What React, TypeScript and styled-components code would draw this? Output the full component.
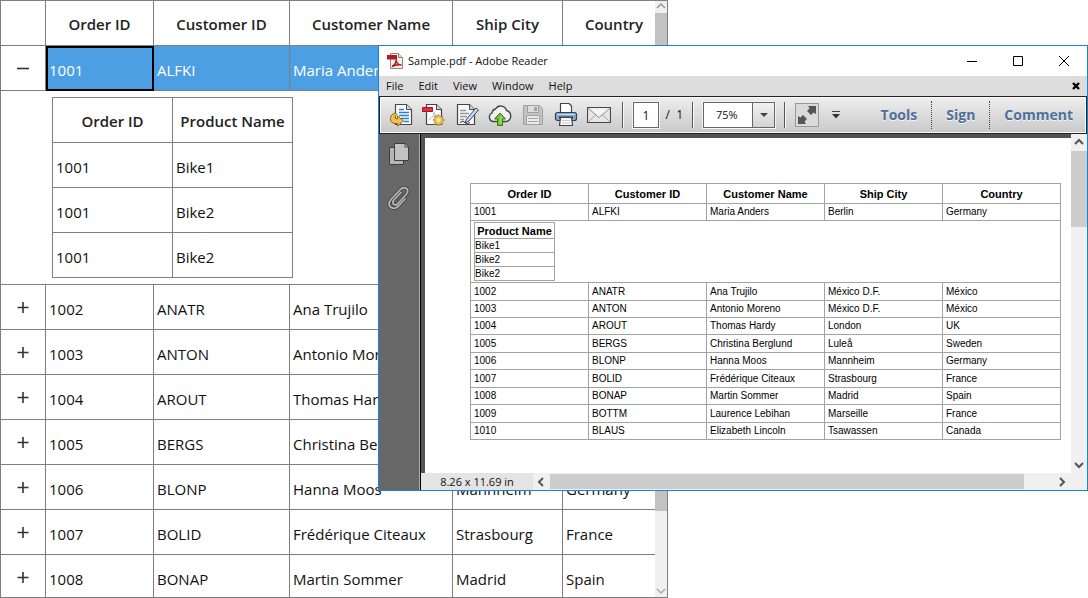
import React from "react";
import styled, { createGlobalStyle, css } from "styled-components";

const GlobalStyle = createGlobalStyle`
  *, *::before, *::after { box-sizing: border-box; }
  body { margin: 0; background: #fff; overflow-x: hidden; }
  button, input, select { font: inherit; color: inherit; margin: 0; }
`;

const uiFont = `"Open Sans", "Noto Sans", sans-serif`;
const line = "#7f7f7f";

/* ---------- page ---------- */

const Desktop = styled.div`
  display: grid;
  grid-template-columns: 378fr 290fr 420fr;
  align-items: start;
  height: 100vh;
  overflow: hidden;
  font-family: ${uiFont};
`;

/* ---------- data grid ---------- */

const GridPane = styled.section`
  grid-area: 1 / 1 / 2 / 3;
  display: flex;
  height: 100vh;
  border: 1px solid ${line};
  overflow: hidden;
`;

const GridView = styled.div`
  flex: 1;
  min-width: 0;
  overflow: hidden;
`;

const GridTable = styled.table`
  width: 100%;
  table-layout: fixed;
  border-collapse: separate;
  border-spacing: 0;
  font-size: 15px;
  line-height: 20px;
  color: #111;
`;

const GridCol = styled.col<{ $width: number }>`
  width: ${(p) => p.$width}px;
`;

const GridRow = styled.tr<{ $selected?: boolean }>`
  height: 45px;
  ${(p) =>
    p.$selected &&
    css`
      color: #fff;
      td + td { background: #4d9fe3; }
    `}
`;

const cell = css<{ $last?: boolean }>`
  padding: 4px 3px 0;
  border-right: ${(p) => (p.$last ? 0 : 1)}px solid ${line};
  border-bottom: 1px solid ${line};
  white-space: nowrap;
  overflow: hidden;
`;

const GridHead = styled.th<{ $last?: boolean }>`
  ${cell}
  padding: 2px 2px 0 ${(p) => (p.$last ? 12 : 2)}px;
  font-weight: 600;
  text-align: center;
  color: #222;
`;

const GridCell = styled.td<{ $current?: boolean; $last?: boolean }>`
  ${cell}
  ${(p) =>
    p.$current &&
    css`
      outline: 2px solid #000;
      outline-offset: -2px;
    `}
`;

const ExpandCell = styled.td`
  ${cell}
  padding: 0;
  text-align: center;
`;

const ExpandButton = styled.button`
  display: block;
  width: 44px;
  height: 44px;
  padding: 0;
  border: 0;
  background: none;
  svg { display: block; margin: 0 auto; }
`;

const DetailCell = styled.td`
  padding: 6px 6px 6px 51px;
  border-bottom: 1px solid ${line};
`;

const DetailTable = styled(GridTable)`
  width: 241px;
  border: 1px solid ${line};
  border-width: 1px 0 0 1px;
`;

/* ---------- scrollbars ---------- */

const VScroll = styled.div<{ $width: number }>`
  display: flex;
  flex-direction: column;
  flex: none;
  width: ${(p) => p.$width}px;
  background: #f0f0f0;
`;

const HScroll = styled.div`
  display: flex;
  flex: 1;
  background: #f0f0f0;
  padding: 1px 0;
`;

const ScrollButton = styled.button<{ $w: number; $h: number }>`
  display: flex;
  align-items: center;
  justify-content: center;
  flex: none;
  width: ${(p) => p.$w}px;
  height: ${(p) => p.$h}px;
  padding: 0;
  border: 0;
  background: none;
`;

const Track = styled.div<{ $vertical?: boolean }>`
  flex: 1;
  display: flex;
  flex-direction: ${(p) => (p.$vertical ? "column" : "row")};
`;

const Thumb = styled.div<{ $size: string; $color: string }>`
  flex: 0 0 ${(p) => p.$size};
  background: ${(p) => p.$color};
`;

/* ---------- reader window ---------- */

const Reader = styled.section`
  grid-area: 1 / 2 / 2 / 4;
  z-index: 1;
  margin-top: 45px;
  border: 1px solid #1883d7;
  background: #fff;
  font-size: 12px;
  line-height: 16px;
  color: #111;
`;

const TitleBar = styled.header`
  display: flex;
  align-items: center;
  height: 30px;
  padding-left: 8px;
`;

const Title = styled.h1`
  flex: 1;
  margin: 0 0 0 5px;
  font: 11px/16px ${uiFont};
`;

const CaptionButton = styled.button`
  display: flex;
  align-items: center;
  justify-content: center;
  width: 46px;
  height: 30px;
  padding: 0;
  border: 0;
  background: none;
`;

const MenuBar = styled.nav`
  display: flex;
  align-items: center;
  gap: 1px;
  height: 20px;
  padding: 0 7px 0 0;
  background: #ddd;
`;

const MenuItem = styled.button`
  padding: 0 7px;
  border: 0;
  background: none;
  font-size: 11px;
`;

const CloseDoc = styled.button`
  display: flex;
  margin-left: auto;
  padding: 0;
  border: 0;
  background: none;
`;

const Toolbar = styled.div`
  display: flex;
  align-items: center;
  height: 38px;
  padding: 0 4px;
  border: 1px solid #222;
  background: linear-gradient(#eee, #c9c9c9);
  box-shadow: inset 0 0 0 1px #fafafa;
`;

const ToolButton = styled.button`
  display: flex;
  align-items: center;
  justify-content: center;
  width: 33px;
  height: 32px;
  padding: 0;
  border: 0;
  background: none;
`;

const Separator = styled.span`
  width: 2px;
  height: 26px;
  border-left: 1px solid #555;
  border-right: 1px solid #f8f8f8;
  margin: 0 9px 0 7px;
`;

const PageInput = styled.input`
  width: 26px;
  height: 26px;
  padding: 0;
  border: 1px solid #666;
  background: #fff;
  box-shadow: 0 0 0 1px #f4f4f4;
  text-align: center;
`;

const PageCount = styled.span`
  width: 26px;
  padding-right: 2px;
  text-align: right;
  white-space: pre;
`;

const ZoomBox = styled.span`
  position: relative;
  display: flex;
  width: 72px;
  height: 26px;
  margin-right: 2px;
  box-shadow: 0 0 0 1px #f4f4f4;
`;

const ZoomSelect = styled.select`
  appearance: none;
  width: 100%;
  padding: 0 0 0 12px;
  border: 1px solid #666;
  border-radius: 0;
  background: #fff;
  font-size: 11px;
`;

const ZoomArrow = styled.span`
  position: absolute;
  inset: 1px 1px 1px auto;
  display: flex;
  align-items: center;
  justify-content: center;
  width: 22px;
  border-left: 1px solid #666;
  background: linear-gradient(#f2f2f2, #d4d4d4);
  pointer-events: none;
`;

const FitButton = styled(ToolButton)`
  width: 24px;
  height: 24px;
  border: 1px solid #999;
  background: #dadada;
`;

const PanelLinks = styled.div`
  display: flex;
  align-items: center;
  margin-left: auto;
`;

const PanelButton = styled.button`
  height: 28px;
  padding: 0 14px;
  border: 0;
  background: none;
  font-size: 14px;
  font-weight: 700;
  color: #4f6f9c;
  text-shadow: 0 1px 0 #f4f4f4;
  & + & { border-left: 1px dotted #444; }
  &:last-child { padding-right: 9px; }
`;

const ReaderBody = styled.div`
  display: flex;
`;

const SideBar = styled.aside`
  display: flex;
  flex-direction: column;
  align-items: center;
  gap: 12px;
  width: 42px;
  padding: 4px 2px 4px 0;
  background: #676767;
  border-right: 1px solid #000;
  box-shadow: inset -1px 0 0 #aaa;
`;

const SideButton = styled(ToolButton)`
  height: 32px;
`;

const Viewer = styled.div`
  flex: 1;
  min-width: 0;
`;

const PageRow = styled.div`
  padding: 4px 0 0 4px;
  background: #535353;
`;

const Paper = styled.div`
  padding: 45px 10px 33px 45px;
  background: #fff;
`;

const StatusRow = styled.div`
  display: flex;
  height: 17px;
`;

const PageSize = styled.div`
  width: 112px;
  background: #e4e4e4;
  font-size: 11px;
  line-height: 17px;
  text-align: center;
`;

/* ---------- exported table ---------- */

const pdfLine = "#a3a3a3";

const PdfTable = styled.table`
  width: 100%;
  table-layout: fixed;
  border-collapse: separate;
  border-spacing: 0;
  border: 1px solid ${pdfLine};
  border-width: 1px 0 0 1px;
  font: 10px/12px "Liberation Sans", Arial, sans-serif;
  color: #000;
`;

const PdfRow = styled.tr<{ $height: number }>`
  height: ${(p) => p.$height}px;
`;

const PdfHead = styled.th`
  padding: 0;
  border-right: 1px solid ${pdfLine};
  border-bottom: 1px solid ${pdfLine};
  font-size: 11px;
  white-space: nowrap;
`;

const PdfCell = styled.td<{ $inset?: number }>`
  padding: 0 0 0 ${(p) => p.$inset ?? 3}px;
  border-right: 1px solid ${pdfLine};
  border-bottom: 1px solid ${pdfLine};
  white-space: nowrap;
`;

const PdfNested = styled(PdfTable)`
  width: 81px;
`;

/* ---------- data ---------- */

const headers = ["Order ID", "Customer ID", "Customer Name", "Ship City", "Country"];
const columnWidths = [45, 108, 136, 163, 110, 92];

const orders = [
  ["1001", "ALFKI", "Maria Anders", "Berlin", "Germany"],
  ["1002", "ANATR", "Ana Trujilo", "México D.F.", "México"],
  ["1003", "ANTON", "Antonio Moreno", "México D.F.", "México"],
  ["1004", "AROUT", "Thomas Hardy", "London", "UK"],
  ["1005", "BERGS", "Christina Berglund", "Luleå", "Sweden"],
  ["1006", "BLONP", "Hanna Moos", "Mannheim", "Germany"],
  ["1007", "BOLID", "Frédérique Citeaux", "Strasbourg", "France"],
  ["1008", "BONAP", "Martin Sommer", "Madrid", "Spain"],
  ["1009", "BOTTM", "Laurence Lebihan", "Marseille", "France"],
  ["1010", "BLAUS", "Elizabeth Lincoln", "Tsawassen", "Canada"],
];

const products = ["Bike1", "Bike2", "Bike2"];
const pdfRowHeights = [18, 17, 17, 18, 17, 18, 17, 18, 17];

/* ---------- icons ---------- */

const arrowPaths = {
  up: "M1 6 L5 2 L9 6",
  down: "M1 3 L5 7 L9 3",
  left: "M6 1 L2 5 L6 9",
  right: "M2 1 L6 5 L2 9",
};

const Arrow = ({ dir, color, weight = 2 }: { dir: keyof typeof arrowPaths; color: string; weight?: number }) => (
  <svg width="10" height="10" viewBox="0 0 10 10" fill="none" stroke={color} strokeWidth={weight}>
    <path d={arrowPaths[dir]} />
  </svg>
);

const Expander = ({ open }: { open: boolean }) => (
  <svg width="12" height="12" viewBox="0 0 12 12" stroke="#333" strokeWidth="1.6">
    <path d={open ? "M0 6.5H12" : "M0.500 6.500H11.500M6 1V12"} />
  </svg>
);

const PdfLogo = () => (
  <svg width="16" height="16" viewBox="0 0 16 16">
    <path d="M3.500 .5H11.500L15.500 4.500V15.500H3.500Z" fill="#f6f1f1" stroke="#8d8484" />
    <path d="M11.500 .5V4.500H15.500" fill="#ddd" stroke="#8d8484" />
    <path d="M0 2H10V6.500H0Z" fill="#b8161c" />
    <path d="M5 13.500C7.500 12 9.500 9.500 9 6.500C9.500 10 12 12 14.500 12C11 11.500 8 12 5 13.500Z" fill="none" stroke="#b8161c" strokeWidth="1.500" />
  </svg>
);

const OpenIcon = () => (
  <svg width="24" height="24" viewBox="0 0 24 24">
    <path d="M6.500 1.500H17.500L22.500 6.500V21.500H6.500Z" fill="#fbfbfb" stroke="#4a4a4a" strokeWidth="1.200" />
    <path d="M17.500 1.500V6.500H22.500" fill="#d5d5d5" stroke="#4a4a4a" />
    <path d="M10 6.500H15M10 9.500H20M10 12.500H20M12 15.500H20M15 18.500H20" stroke="#2d7fd0" strokeWidth="1.500" />
    <path d="M6.500 10C1 11 -.5 18 4 20Q6 21 8.500 20.500V23L14.500 18L8.500 13V16C6 16.500 5 14 8 11.500Z" fill="#f3c24b" stroke="#8a6416" />
  </svg>
);

const CreateIcon = () => (
  <svg width="24" height="24" viewBox="0 0 24 24">
    <path d="M4.500 1.500H14.500L19.500 6.500V21.500H4.500Z" fill="#fbfbfb" stroke="#444" strokeWidth="1.200" />
    <path d="M14.500 1.500V6.500H19.500" fill="#d5d5d5" stroke="#444" />
    <path d="M.5 4.500H10.500V8.500H.5Z" fill="#e0303a" stroke="#a31820" />
    <path d="M7 17C10 15 12 12 12 9.500Q13 13 16 13" fill="none" stroke="#b8b8b8" />
    <path d="M16.500 11.500L18 13.500L20.500 13L20 15.500L22.500 17L20 18.500L20.500 21.500L18 21L16.500 23L15 21L12.500 21.500L13 18.500L11 17L13 15.500L12.500 13L15 13.500Z" fill="#f0c05a" stroke="#a37c28" strokeWidth=".8" />
    <circle cx="16.500" cy="17" r="2" fill="#fbe3a0" />
  </svg>
);

const SignIcon = () => (
  <svg width="24" height="24" viewBox="0 0 24 24">
    <path d="M2.500 1.500H14.500L19.500 6.500V21.500H2.500Z" fill="#f7f7f7" stroke="#444" strokeWidth="1.200" />
    <path d="M14.500 1.500V6.500H19.500" fill="#d5d5d5" stroke="#444" />
    <path d="M5 7.500H11M5 10.500H14M5 13.500H12M5 16.500H9" stroke="#999" strokeWidth="1.300" />
    <path d="M21 5L23.500 7L14 18L10 20L11.500 16Z" fill="#c7d9ec" stroke="#2f4a68" />
    <path d="M5 19.500Q8 17 10 19.500T15 19.500" fill="none" stroke="#333" />
  </svg>
);

const CloudIcon = () => (
  <svg width="26" height="24" viewBox="0 0 26 24">
    <path d="M6 18.500A4.500 4.500 0 0 1 5 10A4.500 4.500 0 0 1 8.500 6A6 6 0 0 1 19.500 7.500A5.800 5.800 0 0 1 20 18.500Z" fill="#eef0f1" stroke="#444" strokeWidth="1.300" />
    <path d="M13 10L18.500 16H15.500V22.500H10.500V16H7.500Z" fill="#6fc02f" stroke="#3a7a17" />
    <path d="M13 12L16 15H14.500V21H12.500Z" fill="#a0dc70" />
  </svg>
);

const SaveIcon = () => (
  <svg width="24" height="24" viewBox="0 0 24 24" stroke="#a0a0a0">
    <path d="M2.500 2.500H18.500L21.500 5.500V21.500H2.500Z" fill="#c4c4c4" />
    <path d="M6.500 2.500H17.500V9.500H6.500Z" fill="#dedede" />
    <path d="M13.500 4.500H15.500V7.500H13.500Z" fill="#a8a8a8" />
    <path d="M5.500 12.500H18.500V21.500H5.500Z" fill="#ececec" />
    <path d="M7 15.500H17M7 18.500H17" />
  </svg>
);

const PrintIcon = () => (
  <svg width="24" height="24" viewBox="0 0 24 24">
    <path d="M6.500 .5H15L17.500 3V11H6.500Z" fill="#fff" stroke="#444" strokeWidth="1.200" />
    <rect x="1.500" y="9.500" width="21" height="8" rx="2" fill="#86a9cb" stroke="#2f4258" strokeWidth="1.200" />
    <path d="M3 11.500H21" stroke="#c9dced" />
    <path d="M5 14.500H19" stroke="#26384b" strokeWidth="2" />
    <path d="M6.500 14.500H17.500L18.500 22.500H5.500Z" fill="#fafafa" stroke="#444" strokeWidth="1.200" />
    <path d="M8 17.500H16M8 20H16" stroke="#c3ccd4" />
  </svg>
);

const MailIcon = () => (
  <svg width="24" height="24" viewBox="0 0 24 24">
    <path d="M.5 4.500H23.500V19.500H.5Z" fill="#e6e6e6" stroke="#484848" strokeWidth="1.200" />
    <path d="M1.500 18.500L9 11.500M22.500 18.500L15 11.500" stroke="#a8a8a8" />
    <path d="M1.500 5.500L12 14.500L22.500 5.500" fill="#f4f4f4" stroke="#8d8d8d" />
  </svg>
);

const FitIcon = () => (
  <svg width="20" height="20" viewBox="0 0 20 20" fill="#555">
    <path d="M11 1H19V9L16.500 7.500L14 10L10 6L12.500 3.500Z" />
    <path d="M9 19H1V11L3.500 12.500L6 10L10 14L7.500 16.500Z" />
  </svg>
);

const MoreIcon = () => (
  <svg width="10" height="10" viewBox="0 0 10 10">
    <path d="M1 1.500H9" stroke="#444" />
    <path d="M1 4H9L5 8.500Z" fill="#333" />
  </svg>
);

const PagesIcon = () => (
  <svg width="22" height="24" viewBox="0 0 22 24" fill="#b5b5b5" stroke="#3f3f3f">
    <path d="M1.500 5.500H15.500V22.500H1.500Z" />
    <path d="M6.500 1.500H17.500L20.500 4.500V18.500H6.500Z" fill="#c2c2c2" />
    <path d="M17 2V5H20" fill="none" />
  </svg>
);

const ClipIcon = () => (
  <svg width="24" height="24" viewBox="0 0 24 24" fill="none" strokeLinecap="round">
    <g stroke="#3f3f3f" strokeWidth="3.400">
      <path d="M14 6.500L6.500 14.500Q5 17 7 18.500Q9 19.500 10.500 18L19.500 8Q22 4.500 19.500 2.500Q17 .8 14 3L4 13.500Q.5 18 3.500 21Q7 24 11 20.500L18 13" />
    </g>
    <g stroke="#b5b5b5" strokeWidth="1.800">
      <path d="M14 6.500L6.500 14.500Q5 17 7 18.500Q9 19.500 10.500 18L19.500 8Q22 4.500 19.500 2.500Q17 .8 14 3L4 13.500Q.5 18 3.500 21Q7 24 11 20.500L18 13" />
    </g>
  </svg>
);

const tools = [
  { label: "Open", icon: <OpenIcon /> },
  { label: "Create PDF", icon: <CreateIcon /> },
  { label: "Sign document", icon: <SignIcon /> },
  { label: "Upload", icon: <CloudIcon /> },
  { label: "Save", icon: <SaveIcon /> },
  { label: "Print", icon: <PrintIcon /> },
  { label: "E-mail", icon: <MailIcon /> },
];

/* ---------- components ---------- */

function OrderRow({ order, open }: { order: string[]; open: boolean }) {
  return (
    <GridRow $selected={open}>
      <ExpandCell>
        <ExpandButton aria-label={open ? "Collapse" : "Expand"} aria-expanded={open}>
          <Expander open={open} />
        </ExpandButton>
      </ExpandCell>
      {order.map((value, i) => (
        <GridCell key={i} $current={open && i === 0} $last={i === order.length - 1}>{value}</GridCell>
      ))}
    </GridRow>
  );
}

function OrdersGrid() {
  return (
    <GridPane aria-label="Orders">
      <GridView>
        <GridTable>
          <colgroup>
            {columnWidths.map((w, i) => <GridCol key={i} $width={w} />)}
          </colgroup>
          <thead>
            <GridRow>
              <GridHead />
              {headers.map((h, i) => <GridHead key={h} $last={i === headers.length - 1}>{h}</GridHead>)}
            </GridRow>
          </thead>
          <tbody>
            <OrderRow order={orders[0]} open />
            <tr>
              <DetailCell colSpan={6}>
                <DetailTable>
                  <thead>
                    <GridRow>
                      <GridHead>Order ID</GridHead>
                      <GridHead>Product Name</GridHead>
                    </GridRow>
                  </thead>
                  <tbody>
                    {products.map((name, i) => (
                      <GridRow key={i}>
                        <GridCell>1001</GridCell>
                        <GridCell>{name}</GridCell>
                      </GridRow>
                    ))}
                  </tbody>
                </DetailTable>
              </DetailCell>
            </tr>
            {orders.slice(1, 8).map((o) => <OrderRow key={o[0]} order={o} open={false} />)}
          </tbody>
        </GridTable>
      </GridView>
      <VScroll $width={12}>
        <ScrollButton $w={12} $h={12} aria-label="Scroll up"><Arrow dir="up" color="#999" weight={1.5} /></ScrollButton>
        <Track $vertical><Thumb $size="87%" $color="#c2c2c2" /></Track>
        <ScrollButton $w={12} $h={12} aria-label="Scroll down"><Arrow dir="down" color="#aaa" weight={1.5} /></ScrollButton>
      </VScroll>
    </GridPane>
  );
}

function ExportedTable() {
  return (
    <PdfTable>
      <thead>
        <PdfRow $height={20}>
          {headers.map((h) => <PdfHead key={h}>{h}</PdfHead>)}
        </PdfRow>
      </thead>
      <tbody>
        <PdfRow $height={17}>
          {orders[0].map((v) => <PdfCell key={v}>{v}</PdfCell>)}
        </PdfRow>
        <PdfRow $height={62}>
          <PdfCell colSpan={5}>
            <PdfNested>
              <thead>
                <PdfRow $height={16}><PdfHead>Product Name</PdfHead></PdfRow>
              </thead>
              <tbody>
                {products.map((name, i) => (
                  <PdfRow key={i} $height={14}><PdfCell $inset={0}>{name}</PdfCell></PdfRow>
                ))}
              </tbody>
            </PdfNested>
          </PdfCell>
        </PdfRow>
        {orders.slice(1).map((o, i) => (
          <PdfRow key={o[0]} $height={pdfRowHeights[i]}>
            {o.map((v) => <PdfCell key={v}>{v}</PdfCell>)}
          </PdfRow>
        ))}
      </tbody>
    </PdfTable>
  );
}

function ReaderWindow() {
  return (
    <Reader>
      <TitleBar>
        <PdfLogo />
        <Title>Sample.pdf - Adobe Reader</Title>
        <CaptionButton aria-label="Minimize">
          <svg width="10" height="10" stroke="#000"><path d="M0 5.500H10" /></svg>
        </CaptionButton>
        <CaptionButton aria-label="Maximize">
          <svg width="10" height="10" stroke="#000" fill="none"><path d="M.5 .5H9.500V9.500H.5Z" /></svg>
        </CaptionButton>
        <CaptionButton aria-label="Close">
          <svg width="10" height="10" stroke="#000"><path d="M0 0L10 10M10 0L0 10" /></svg>
        </CaptionButton>
      </TitleBar>
      <MenuBar>
        {["File", "Edit", "View", "Window", "Help"].map((m) => <MenuItem key={m}>{m}</MenuItem>)}
        <CloseDoc aria-label="Close document">
          <svg width="8" height="8" stroke="#000" strokeWidth="2.400"><path d="M1 1L7 7M7 1L1 7" /></svg>
        </CloseDoc>
      </MenuBar>
      <Toolbar>
        {tools.map((t) => <ToolButton key={t.label} aria-label={t.label}>{t.icon}</ToolButton>)}
        <Separator />
        <PageInput aria-label="Page" defaultValue="1" />
        <PageCount>/  1</PageCount>
        <Separator />
        <ZoomBox>
          <ZoomSelect aria-label="Zoom" defaultValue="75%"><option>75%</option></ZoomSelect>
          <ZoomArrow>
            <svg width="8" height="4" fill="#444"><path d="M0 0H8L4 4Z" /></svg>
          </ZoomArrow>
        </ZoomBox>
        <Separator />
        <FitButton aria-label="Full screen"><FitIcon /></FitButton>
        <ToolButton aria-label="More tools"><MoreIcon /></ToolButton>
        <PanelLinks>
          <PanelButton>Tools</PanelButton>
          <PanelButton>Sign</PanelButton>
          <PanelButton>Comment</PanelButton>
        </PanelLinks>
      </Toolbar>
      <ReaderBody>
        <SideBar>
          <SideButton aria-label="Page thumbnails"><PagesIcon /></SideButton>
          <SideButton aria-label="Attachments"><ClipIcon /></SideButton>
        </SideBar>
        <Viewer>
          <PageRow>
            <Paper><ExportedTable /></Paper>
          </PageRow>
          <StatusRow>
            <PageSize>8.26 x 11.69 in</PageSize>
            <HScroll>
              <ScrollButton $w={17} $h={15} aria-label="Scroll left"><Arrow dir="left" color="#555" /></ScrollButton>
              <Track><Thumb $size="94%" $color="#cdcdcd" /></Track>
              <ScrollButton $w={17} $h={15} aria-label="Scroll right"><Arrow dir="right" color="#555" /></ScrollButton>
            </HScroll>
          </StatusRow>
        </Viewer>
        <VScroll $width={16}>
          <ScrollButton $w={16} $h={17} aria-label="Scroll up"><Arrow dir="up" color="#555" /></ScrollButton>
          <Track $vertical><Thumb $size="25%" $color="#cdcdcd" /></Track>
          <ScrollButton $w={16} $h={17} aria-label="Scroll down"><Arrow dir="down" color="#555" /></ScrollButton>
          <ScrollButton as="span" $w={16} $h={17} />
        </VScroll>
      </ReaderBody>
    </Reader>
  );
}

export default function App() {
  return (
    <>
      <GlobalStyle />
      <Desktop>
        <OrdersGrid />
        <ReaderWindow />
      </Desktop>
    </>
  );
}
